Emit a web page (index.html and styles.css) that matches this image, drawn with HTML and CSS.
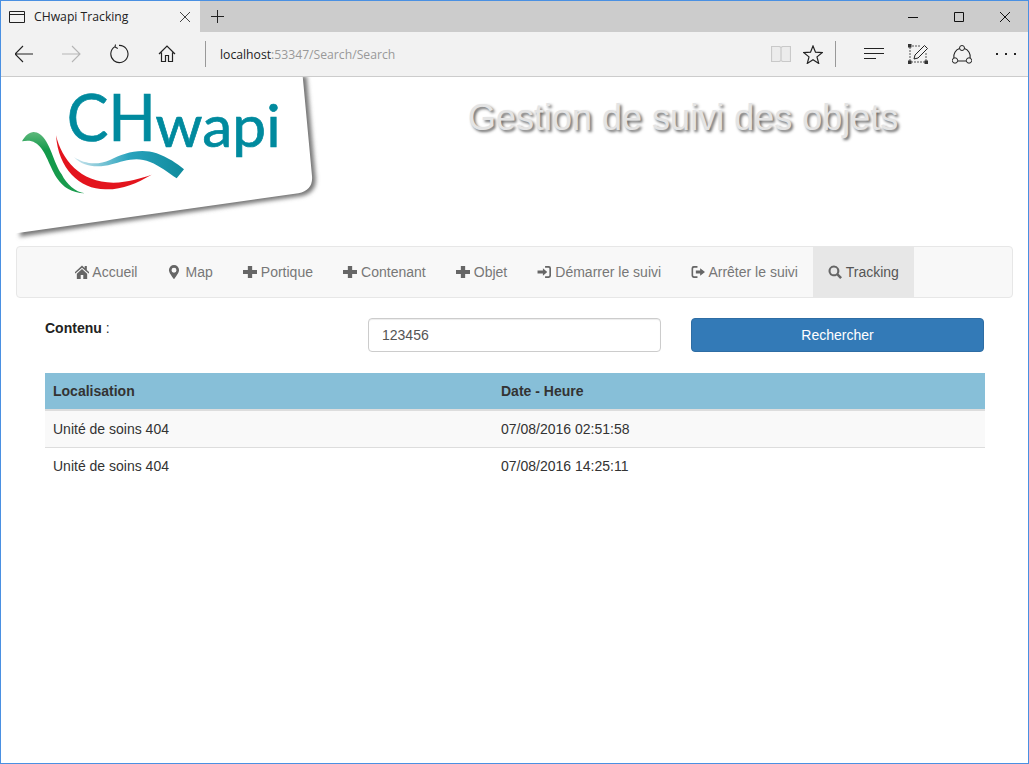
FILE: index.html
```html
<!DOCTYPE html>
<html lang="fr">
<head>
    <meta charset="UTF-8">
    <title>CHwapi Tracking</title>
    <link rel="stylesheet" href="styles.css">
</head>
<body>
<div class="window">
    <!-- Browser title bar -->
    <div class="tabbar">
        <div class="tab">
            <svg class="tab-icon" width="16" height="12" viewBox="0 0 16 12"><path d="M.5.5h15v11H.5zM.5 3.5h15" fill="none" stroke="#222"/></svg>
            <span class="tab-title">CHwapi Tracking</span>
            <svg class="tab-close" width="10" height="10" viewBox="0 0 10 10"><path d="M0 0l10 10M10 0L0 10" stroke="#444" fill="none"/></svg>
        </div>
        <div class="new-tab">
            <svg width="13" height="13" viewBox="0 0 13 13"><path d="M6.500 0v13M0 6.500h13" stroke="#222" fill="none"/></svg>
        </div>
        <div class="spacer"></div>
        <div class="win-btn"><svg width="10" height="10" viewBox="0 0 10 10"><path d="M0 5.500h10" stroke="#111"/></svg></div>
        <div class="win-btn"><svg width="10" height="10" viewBox="0 0 10 10"><path d="M.5.5h9v9h-9z" stroke="#111" fill="none"/></svg></div>
        <div class="win-btn"><svg width="10" height="10" viewBox="0 0 10 10"><path d="M0 0l10 10M10 0L0 10" stroke="#111" fill="none"/></svg></div>
    </div>

    <!-- Browser toolbar -->
    <div class="toolbar">
        <div class="tool"><svg width="20" height="18" viewBox="1 0 20 18"><path d="M19 9H1M9 1L1 9l8 8" fill="none" stroke="#222" stroke-width="1.100"/></svg></div>
        <div class="tool"><svg width="20" height="18" viewBox="1 0 20 18"><path d="M1 9h18M11 1l8 8-8 8" fill="none" stroke="#b5b5b5" stroke-width="1.100"/></svg></div>
        <div class="tool"><svg width="20" height="20" viewBox="1 0 20 20"><path d="M6 2.600A8.600 8.600 0 1 0 10 1.400M6.500 .5L6 3l2.800 1.400" fill="none" stroke="#222" stroke-width="1.100"/></svg></div>
        <div class="tool"><svg width="18" height="18" viewBox="0 0 18 18"><path d="M1 9l8-8 8 8M3.500 7.500V16.500H7.500V10.500H10.500V16.500H14.500V7.500" fill="none" stroke="#222" stroke-width="1.200"/></svg></div>
        <div class="address">
            <span class="host">localhost</span><span class="url-rest">:53347/Search/Search</span>
        </div>
        <div class="tool-sm"><svg width="20" height="18" viewBox="0 0 20 18"><path d="M.5 1.500h8l1.500 1 1.500-1h8v15h-8l-1.500-1-1.500 1h-8zM10 2.500v13" fill="#ececec" stroke="#c9c9c9" stroke-width="1.200"/></svg></div>
        <div class="tool-sm"><svg width="20" height="19" viewBox="0 0 20 19"><path d="M10 1l2.500 6.200 6.700.4-5.200 4.300 1.700 6.500L10 14.800l-5.700 3.600 1.700-6.500L.8 7.600l6.700-.4z" fill="none" stroke="#222" stroke-width="1.200"/></svg></div>
        <div class="tool-divider"></div>
        <div class="tool-md"><svg width="20" height="14" viewBox="0 0 20 14"><path d="M0 1.500h20M0 6.500h20M0 11.500h12" stroke="#222" fill="none"/></svg></div>
        <div class="tool-md"><svg width="20" height="20" viewBox="0 0 20 20"><path d="M2 3v15M4 2h9M18 9v9M3 18h14" stroke="#555" stroke-dasharray="2 1" fill="none"/><path d="M0 0h3.500v3.500H0zM0 16.500h3.500V20H0zM16.500 16.500H20V20h-3.500z" fill="#333"/><path d="M6 15l1-4L16.500 1.500l3 3L10 14z" fill="#f2f2f2" stroke="#222"/></svg></div>
        <div class="tool-md"><svg width="20" height="19" viewBox="0 0 20 19"><path d="M7.500 3.500A8.500 8.500 0 0 0 1.900 13M12.500 3.500A8.500 8.500 0 0 1 18.100 13M5.500 16h9" fill="none" stroke="#222" stroke-width="1.100"/><circle cx="10" cy="3" r="2.500" fill="none" stroke="#222"/><circle cx="3" cy="15.500" r="2.700" fill="none" stroke="#222"/><circle cx="17" cy="15.500" r="2.700" fill="none" stroke="#222"/></svg></div>
        <div class="tool-md"><svg width="20" height="3" viewBox="0 0 20 3"><path d="M0 0h2v2H0zM9 0h2v2H9zM18 0h2v2h-2z" fill="#222"/></svg></div>
    </div>

    <div class="page">
        <header class="site-header">
            <svg class="logo" width="340" height="170" viewBox="3 3 1020 510">
                <defs>
                    <filter id="card-blur" x="-5%" y="-5%" width="110%" height="110%"><feGaussianBlur stdDeviation="6"/></filter>
                    <linearGradient id="green-wave" x1="0" y1="0" x2="0" y2="1">
                        <stop offset="0" stop-color="#5fb97c"/>
                        <stop offset=".3" stop-color="#12994a"/>
                        <stop offset="1" stop-color="#1a9c4e"/>
                    </linearGradient>
                    <linearGradient id="blue-wave" x1="0" y1="0" x2="1" y2="0">
                        <stop offset="0" stop-color="#cfe6ee"/>
                        <stop offset=".5" stop-color="#28a3bd"/>
                        <stop offset="1" stop-color="#0f8a9c"/>
                    </linearGradient>
                </defs>
                <path d="M920 0L947 304Q951 350 906 360L58 482L100 300V0Z" fill="#777" filter="url(#card-blur)"/>
                <path d="M908 0L936 300Q940 342 895 352L48 472L0 440V0Z" fill="#fff"/>
                <path d="M66 196C80 170 100 160 120 175C150 195 160 260 185 295C200 325 225 348 255 352C215 350 190 335 170 305C145 265 135 215 105 200C95 193 80 193 66 196Z" fill="url(#green-wave)"/>
                <path d="M168 178C185 250 240 320 340 320C385 318 420 308 455 296C410 322 370 340 320 340C240 342 175 280 168 178Z" fill="#e3141d"/>
                <path d="M222 243C250 262 290 270 330 252C370 232 420 215 470 232C505 245 530 262 552 280L530 307C505 290 480 270 450 258C410 240 370 255 335 265C290 278 245 270 222 243Z" fill="url(#blue-wave)"/>
                <text class="logo-caps" x="200" y="195" textLength="268" lengthAdjust="spacingAndGlyphs">CH</text>
                <text class="logo-small" x="466" y="212" textLength="376" lengthAdjust="spacingAndGlyphs">wapi</text>
            </svg>
            <h1 class="site-title">Gestion de suivi des objets</h1>
        </header>

        <nav class="navbar">
            <a class="nav-link"><svg class="glyph" viewBox=".5 .5 13 13"><path d="M7 1L0 7.500l.8.900L7 3l6.200 5.400.8-.9L11.500 5.200V1.500H9.500v1.800zM2.200 8.700V13.500H5.800V9.800H8.200V13.500H11.800V8.700L7 4.300z"/></svg> Accueil</a>
            <a class="nav-link"><svg class="glyph" viewBox=".5 .5 13 13"><path fill-rule="evenodd" d="M7 .5A4.700 4.700 0 0 0 2.300 5.200C2.300 8 5.500 11.500 7 13.800 8.500 11.500 11.700 8 11.700 5.200A4.700 4.700 0 0 0 7 .5zM7 3a2.300 2.300 0 1 1 0 4.600A2.300 2.300 0 0 1 7 3z"/></svg> Map</a>
            <a class="nav-link"><svg class="glyph" viewBox=".5 .5 13 13"><path d="M5 1.500h4v3.700h4.500v3.600H9v3.700H5V8.800H.5V5.200H5z"/></svg> Portique</a>
            <a class="nav-link"><svg class="glyph" viewBox=".5 .5 13 13"><path d="M5 1.500h4v3.700h4.500v3.600H9v3.700H5V8.800H.5V5.200H5z"/></svg> Contenant</a>
            <a class="nav-link"><svg class="glyph" viewBox=".5 .5 13 13"><path d="M5 1.500h4v3.700h4.500v3.600H9v3.700H5V8.800H.5V5.200H5z"/></svg> Objet</a>
            <a class="nav-link"><svg class="glyph" viewBox=".5 .5 13 13"><path d="M6 3.500L10 7l-4 3.500V8.500H1v-3h5zM8 1.500h3.500A2 2 0 0 1 13.500 3.500v7a2 2 0 0 1-2 2H8V11h3a1 1 0 0 0 1-1V4a1 1 0 0 0-1-1H8z"/></svg> Démarrer le suivi</a>
            <a class="nav-link"><svg class="glyph" viewBox=".5 .5 13 13"><path d="M9 3.500L13.500 7 9 10.500V8.500H5v-3h4zM6.500 1.500H3A2 2 0 0 0 1 3.500v7a2 2 0 0 0 2 2h3.500V11H3.500a1 1 0 0 1-1-1V4a1 1 0 0 1 1-1h3z"/></svg> Arrêter le suivi</a>
            <a class="nav-link active"><svg class="glyph" viewBox=".5 .5 13 13"><path fill-rule="evenodd" d="M6 1a5 5 0 1 0 2.700 9.200L11.800 13.500 13.500 11.800 10.300 8.600A5 5 0 0 0 6 1zM6 2.900a3.100 3.100 0 1 1 0 6.200 3.100 3.100 0 0 1 0-6.200z"/></svg> Tracking</a>
        </nav>

        <main class="content">
            <form class="search-form">
                <label class="search-label"><b>Contenu</b> :</label>
                <input class="search-input" type="text" value="123456">
                <button class="search-btn" type="button">Rechercher</button>
            </form>

            <table class="results">
                <thead>
                    <tr><th class="col-place">Localisation</th><th>Date - Heure</th></tr>
                </thead>
                <tbody>
                    <tr><td>Unité de soins 404</td><td>07/08/2016 02:51:58</td></tr>
                    <tr><td>Unité de soins 404</td><td>07/08/2016 14:25:11</td></tr>
                </tbody>
            </table>
        </main>
    </div>
</div>
</body>
</html>
```

FILE: styles.css
```css
* {
    box-sizing: border-box;
}
html, body {
    margin: 0;
    height: 100%;
    overflow: hidden;
}
body {
    font-family: "Liberation Sans", Arial, sans-serif;
    font-size: 14px;
    color: #333;
    background-color: #fff;
}
.window {
    display: flex;
    flex-direction: column;
    height: 764px;
    border: 1px solid #4a90e2;
}

/* browser chrome */
.tabbar {
    display: flex;
    flex: none;
    height: 31px;
    background-color: #ccc;
}
.tab {
    display: flex;
    align-items: center;
    width: 199px;
    padding: 0 10px 0 8px;
    background-color: #f2f2f2;
}
.tab-title {
    flex-grow: 1;
    margin-left: 9px;
    font-family: "Open Sans", sans-serif;
    font-size: 12.200px;
    color: #222;
}
.new-tab {
    display: flex;
    align-items: center;
    justify-content: center;
    width: 34px;
}
.spacer {
    flex-grow: 1;
}
.win-btn {
    display: flex;
    align-items: center;
    justify-content: center;
    width: 46px;
}
.toolbar {
    display: flex;
    flex: none;
    align-items: center;
    height: 45px;
    background-color: #f2f2f2;
    border-bottom: 1px solid #ccc;
}
.tool {
    display: flex;
    align-items: center;
    justify-content: center;
    width: 47.500px;
    height: 100%;
}
.tool-sm {
    display: flex;
    align-items: center;
    justify-content: center;
    width: 32px;
}
.tool-md {
    display: flex;
    align-items: center;
    justify-content: center;
    width: 44px;
}
.tool-divider {
    width: 1px;
    height: 26px;
    margin: 0 16px 0 6px;
    background-color: #999;
}
.address {
    flex-grow: 1;
    height: 26px;
    margin-left: 14px;
    padding-left: 14px;
    border-left: 1px solid #999;
    font-family: "Open Sans", sans-serif;
    font-size: 12.200px;
    line-height: 28px;
}
.host {
    color: #222;
}
.url-rest {
    color: #999;
}

/* page */
.page {
    flex-grow: 1;
    overflow: hidden;
}
.site-header {
    display: flex;
    height: 169px;
}
.logo {
    flex: none;
}
.site-title {
    margin: 17px 0 0 127px;
    font-size: 36px;
    font-weight: 400;
    line-height: 48px;
    color: #e4e4e4;
    text-shadow: 2px 2px 3px #666;
    white-space: nowrap;
}
.logo-caps {
    font-family: Lato, sans-serif;
    font-size: 195px;
    fill: #008a9e;
    stroke: #008a9e;
    stroke-width: 2px;
}
.logo-small {
    font-family: Lato, sans-serif;
    font-size: 172px;
    fill: #008a9e;
    stroke: #008a9e;
    stroke-width: 2px;
}

.navbar {
    display: flex;
    height: 52px;
    margin: 0 15px;
    padding-left: 43px;
    background-color: #f8f8f8;
    border: 1px solid #e7e7e7;
    border-radius: 4px;
}
.nav-link {
    padding: 15px;
    line-height: 20px;
    color: #777;
    white-space: nowrap;
}
.nav-link.active {
    color: #555;
    background-color: #e7e7e7;
}
.glyph {
    display: inline-block;
    width: 14px;
    height: 14px;
    margin-right: .2px;
    vertical-align: -2px;
    fill: #666;
}

.content {
    padding: 20px 0 0 44px;
}
.search-form {
    display: flex;
    width: 939px;
    height: 34px;
    margin-bottom: 21px;
}
.search-label {
    width: 323px;
    line-height: 20px;
}
.search-label b {
    color: #222;
}
.search-input {
    width: 293px;
    height: 34px;
    margin-right: 30px;
    padding: 6px 13px;
    font-family: inherit;
    font-size: 14px;
    color: #555;
    background-color: #fff;
    border: 1px solid #ccc;
    border-radius: 4px;
    box-shadow: inset 0 1px 1px rgba(0,0,0,0.075);
}
.search-btn {
    width: 293px;
    height: 34px;
    font-family: inherit;
    font-size: 14px;
    color: #fff;
    background-color: #337ab7;
    border: 1px solid #2e6da4;
    border-radius: 4px;
}
.results {
    width: 940px;
    border-collapse: collapse;
    line-height: 20px;
}
.results th {
    padding: 8px;
    text-align: left;
    color: #333;
    background-color: #87bfd8;
    border-bottom: 2px solid #ddd;
}
.col-place {
    width: 448px;
}
.results td {
    padding: 8px;
    color: #333;
    border-bottom: 1px solid #ddd;
}
.results tbody tr:nth-child(odd) {
    background-color: #f9f9f9;
}
.results tbody tr:last-child td {
    border-bottom: none;
}
```
